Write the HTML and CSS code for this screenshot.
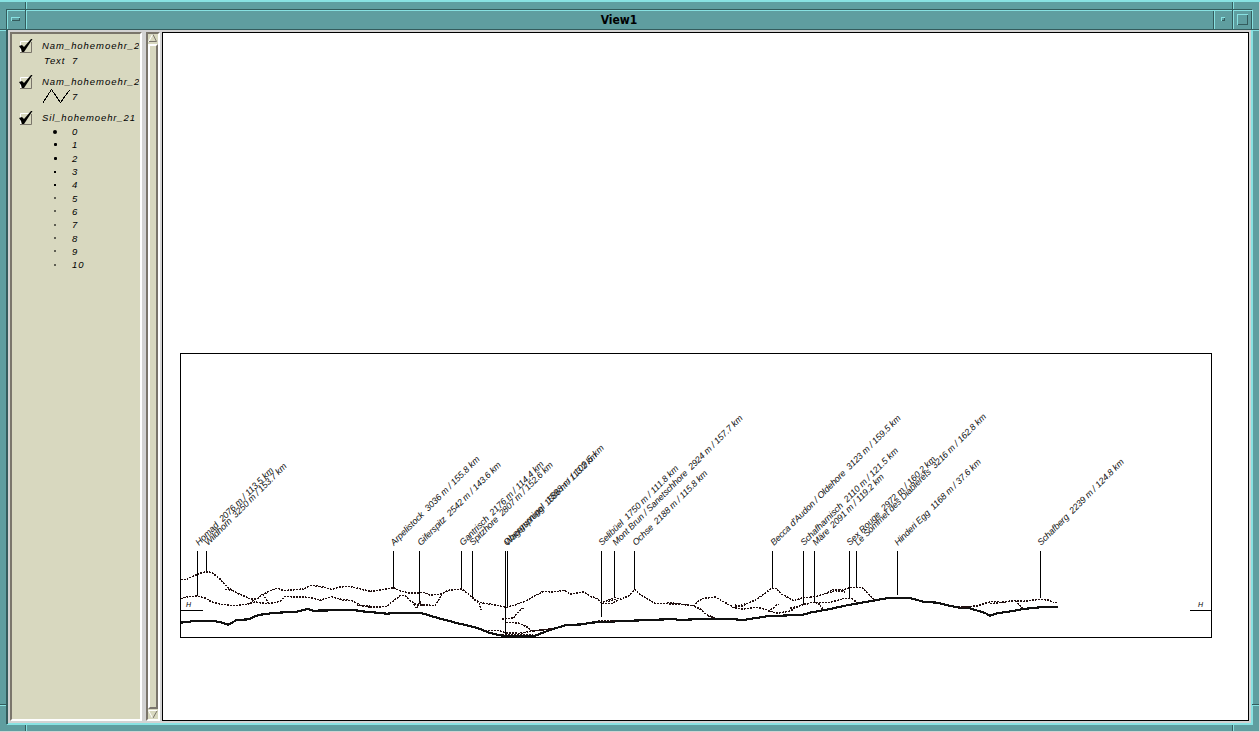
FILE: index.html
```
<!DOCTYPE html>
<html lang="en">
<head>
<meta charset="utf-8">
<title>View1</title>
<link rel="stylesheet" href="styles.css">
</head>
<body>
<main class="window">
  <svg class="frame" width="1260" height="732" shape-rendering="crispEdges" aria-hidden="true">
    <path class="lit" d="M0 0H1260V2H0ZM7 10H1252V11H7ZM7 10H8V29H7ZM0 30H6V31H0ZM26 2H27V29H26ZM1214 11H1215V29H1214ZM1233 2H1234V29H1233ZM1252 10H1253V29H1252ZM1251 30H1253V725H1251ZM1253 30H1259V31H1253ZM7 723H1253V725H7ZM0 705H6V706H0ZM1253 705H1259V706H1253ZM26 725H27V731H26ZM1233 725H1234V731H1233Z"/>
    <path class="dim" d="M6 9H1252V10H6ZM6 9H7V30H6ZM6 29H1259V30H6ZM6 30H8V724H6ZM25 2H26V29H25ZM1213 11H1214V29H1213ZM1232 2H1233V29H1232ZM1251 11H1252V29H1251ZM0 704H6V705H0ZM1252 704H1259V705H1252ZM25 725H26V731H25ZM1232 725H1233V731H1232ZM0 29H6V30H0Z"/>
    <path class="pale" d="M1259 2H1260V732H1259ZM0 731H1260V732H0Z"/>
    <path class="lit" d="M11 17H20V18H11ZM11 17H12V21H11ZM1221 17H1225V18H1221ZM1221 17H1222V21H1221ZM1237 14H1248V15H1237ZM1237 14H1238V25H1237Z"/>
    <path class="dim" d="M12 20H20V21H12ZM19 18H20V21H19ZM1222 20H1225V21H1222ZM1224 18H1225V21H1224ZM1238 24H1248V25H1238ZM1247 15H1248V25H1247Z"/>
  </svg>
  <header class="title">View1</header>
  <div class="content">
    <aside class="legend">
      <section class="theme">
        <div class="name"><svg class="check" viewBox="0 0 15 15"><path class="edge-d" d="M2 13.5H13.500V3"/><path class="edge-l" d="M2.500 13V2.500H12"/><path d="M1 7L4 6L6 8L13 0L14.500 0L8 10L6 13L4 13L3 10Z"/></svg><span>Nam_hohemoehr_2</span></div>
        <div class="sample text"><span>Text</span><b>7</b></div>
      </section>
      <section class="theme">
        <div class="name"><svg class="check" viewBox="0 0 15 15"><path class="edge-d" d="M2 13.5H13.500V3"/><path class="edge-l" d="M2.500 13V2.500H12"/><path d="M1 7L4 6L6 8L13 0L14.500 0L8 10L6 13L4 13L3 10Z"/></svg><span>Nam_hohemoehr_2</span></div>
        <div class="sample"><svg class="zig" viewBox="0 0 28 15"><path d="M.5 14.5L9.500 .5L18.500 13.500L27.500 1"/></svg><b>7</b></div>
      </section>
      <section class="theme">
        <div class="name"><svg class="check" viewBox="0 0 15 15"><path class="edge-d" d="M2 13.5H13.500V3"/><path class="edge-l" d="M2.500 13V2.500H12"/><path d="M1 7L4 6L6 8L13 0L14.500 0L8 10L6 13L4 13L3 10Z"/></svg><span class="sil">Sil_hohemoehr_21</span></div>
        <ul class="classes">
          <li><i class="d4"></i>0</li><li><i class="d35"></i>1</li><li><i class="d3"></i>2</li><li><i class="d2"></i>3</li><li><i class="d2"></i>4</li><li><i></i>5</li><li><i></i>6</li><li><i></i>7</li><li><i></i>8</li><li><i></i>9</li><li><i></i>10</li>
        </ul>
      </section>
    </aside>
    <div class="scroll">
      <svg class="arrow" viewBox="0 0 10 9"><path class="edge-l" d="M.5 8L4.500 .5"/><path class="edge-d" d="M5 .5L8.500 7.500H1"/></svg>
      <div class="thumb"></div>
      <svg class="arrow" viewBox="0 0 10 9"><path class="edge-l" d="M9 .5H.5L4.500 8"/><path class="edge-d" d="M9 1L5 8"/></svg>
    </div>
    <section class="view">
      <svg class="map" viewBox="163 33 1085 687">
        <g class="rule" shape-rendering="crispEdges">
          <path d="M180.500 353.500H1211.500V637.500H180.500ZM181 610.500H203M1190 610.500H1211"/>
          <path d="M197.500 551V595M206.500 551V571M393.500 551V588M419.500 551V603M461.500 551V589M472.500 551V598M505.500 551V636M507.500 551V607M601.500 551V617M614.500 551V598M634.500 551V590M772.500 551V588M803.500 551V604M814.500 551V603M849.500 551V598M856.500 551V588M897.500 551V595M1040.500 551V598"/>
        </g>
        <g transform="translate(170 540) scale(.33333)">
          <path class="near" d="M32 248L75 243L130 242L160 249L175 254L200 240L235 238L265 225L310 219L380 215L412 207L430 212L550 210L600 217"/>
          <path class="far" d="M32 118L50 118L70 108L90 100L105 96L125 97L150 117L170 140L185 150L205 161L225 169L240 176L260 178L275 165L290 158L305 150L322 144L340 152L375 149L400 147L425 135L445 139L465 142L485 149L505 142L530 139L550 141L575 148L600 154"/>
          <path class="far" d="M32 176L55 170L80 168L105 174L125 186L155 193L190 197L230 193L255 186L290 191L315 188L330 183L345 169L370 171L420 172L450 181L485 170L520 180L545 181L560 190L575 198L600 201M240 190L262 172M278 163L290 180L297 192M165 148L185 150M560 196L600 198"/>
        </g>
        <g transform="translate(370 540) scale(.33333)">
          <path class="near" d="M0 216L50 221L90 218L150 218L200 233L260 249L320 263L360 279L400 288L490 289L545 268L590 255L640 253L660 248"/>
          <path class="far" d="M0 154L40 149L70 143L90 152L115 159L165 158L180 165L215 162L235 151L275 147L295 162L315 180L335 189L360 192L410 202L435 195L465 184L520 154L545 156L585 151L600 162L640 156L660 168"/>
          <path class="far" d="M0 201L50 200L65 187L90 167L105 167L120 181L140 195L195 196L205 182L215 163M132 192L140 205L150 186L162 199M307 172L328 190L333 210M395 237L430 234L445 215L462 202M408 247L445 249L470 260L485 274M345 271L385 271L410 279L450 280L485 273L545 267M395 284L490 284M490 273L540 267"/>
        </g>
        <g transform="translate(590 540) scale(.33333)">
          <path class="near" d="M0 248L60 245L100 243L180 240L250 237L270 240L330 237L420 237L460 240L530 229L640 224L660 219"/>
          <path class="far" d="M0 170L15 172L35 188L55 181L75 172L90 178L118 167L135 149L150 163L170 176L195 190L280 193L310 197L335 176L375 171L410 190L435 205L460 207L500 202L530 209L560 220L600 213L640 192L660 191"/>
          <path class="far" d="M35 190L65 190L85 180M55 184L90 174M305 195L330 207L350 224L375 234M230 187L305 197M435 195L455 199L500 178L545 145L558 145L575 162L610 182L640 173L660 172M435 202L470 190M535 215L545 207L565 192M600 205L640 195M355 228L375 233M25 241L75 243"/>
        </g>
        <g transform="translate(810 540) scale(.33333)">
          <path class="near" d="M0 218L60 207L115 195L190 182L240 173L295 173L340 185L380 188L440 202L480 205L525 219L540 227L560 220L610 213L640 207L690 202L743 201"/>
          <path class="far" d="M0 171L20 169L50 159L70 148L95 151L120 143L155 142L175 162L195 180M50 160L75 152L105 156M0 187L60 187L105 175L125 176L142 188M15 187L30 193L38 208"/>
          <path class="far" d="M445 202L500 198L545 184L570 187L610 182L640 184L690 178L715 180L728 188L743 188M540 191L600 184M615 183L640 206M450 202L480 200"/>
        </g>
        <g class="peaks">
          <text transform="translate(199 546) rotate(-45)" textLength="106">Homad&#160; 2076 m / 113.5 km</text>
          <text transform="translate(208 546) rotate(-45)" textLength="112">Wildhorn&#160; 3250 m / 153.7 km</text>
          <text transform="translate(394 546) rotate(-45)" textLength="122">Arpelistock&#160; 3036 m / 155.8 km</text>
          <text transform="translate(421 546) rotate(-45)" textLength="114">Giferspitz&#160; 2542 m / 143.6 km</text>
          <text transform="translate(463 546) rotate(-45)" textLength="115">Gantrisch&#160; 2176 m / 114.4 km</text>
          <text transform="translate(473 546) rotate(-45)" textLength="114">Spitzhore&#160; 2807 m / 152.6 km</text>
          <text transform="translate(507 546) rotate(-45)" textLength="138">Obergurnigel&#160; 1598 m / 109.5 km</text>
          <text transform="translate(508 546) rotate(-45)" textLength="127">Wagersprung&#160; 1586 m / 113.2 km</text>
          <text transform="translate(602 546) rotate(-45)" textLength="109">Selibüel&#160; 1750 m / 111.8 km</text>
          <text transform="translate(616 546) rotate(-45)" textLength="180">Mont Brun / Sanetschhore&#160; 2924 m / 157.7 km</text>
          <text transform="translate(636 546) rotate(-45)" textLength="102">Ochse&#160; 2188 m / 115.8 km</text>
          <text transform="translate(774 546) rotate(-45)" textLength="180">Becca d'Audon / Oldehore&#160; 3123 m / 159.5 km</text>
          <text transform="translate(804 546) rotate(-45)" textLength="134">Schafharnisch&#160; 2110 m / 121.5 km</text>
          <text transform="translate(816 546) rotate(-45)" textLength="97">Märe&#160; 2091 m / 119.2 km</text>
          <text transform="translate(850 546) rotate(-45)" textLength="122">Sex Rouge&#160; 2972 m / 160.2 km</text>
          <text transform="translate(858 546) rotate(-45)" textLength="182">Le Sommet des Diablerets&#160; 3216 m / 162.8 km</text>
          <text transform="translate(898 546) rotate(-45)" textLength="118">Hinderi Egg&#160; 1168 m / 37.6 km</text>
          <text transform="translate(1041 546) rotate(-45)" textLength="118">Schafberg&#160; 2239 m / 124.8 km</text>
        </g>
        <g class="horizon"><text x="186" y="607">H</text><text x="1198" y="607">H</text></g>
      </svg>
    </section>
  </div>
</main>
</body>
</html>
```
FILE: styles.css
```
* { box-sizing: border-box; }
body { margin: 0; overflow: hidden; background: #5f9ea0; font-family: "Liberation Sans", Arial, sans-serif; color: #000; }
.window { position: relative; width: 1260px; height: 732px; padding: 11px 9px 9px 8px; display: flex; flex-direction: column; background: #5f9ea0; }
.frame { position: absolute; left: 0; top: 0; }
.lit { fill: #88e2e2; }
.dim { fill: #345c5d; }
.pale { fill: #d3d3d3; }
.title { position: relative; height: 19px; padding-right: 21px; text-align: center; font: bold 12px/19px "DejaVu Sans Condensed", "DejaVu Sans", sans-serif; }
.content { position: relative; width: 1243px; height: 693px; padding: 2px; display: flex; background: #d3d3d3; }
.legend { width: 132px; height: 689px; margin-right: 4px; padding: 5px 0 0 6px; overflow: hidden; background: #d8d8bf; border: 2px solid; border-color: #7a756b #fff #fff #7a756b; font-size: 9.5px; font-style: italic; letter-spacing: .95px; }
.theme { height: 36px; }
.name { display: flex; height: 14px; white-space: nowrap; overflow: hidden; width: 121px; line-height: 14px; }
.name span { margin-left: 9px; }
.name .sil { letter-spacing: .88px; }
.check { flex: none; width: 15px; height: 15px; }
.edge-l { fill: none; stroke: #fff; }
.edge-d { fill: none; stroke: #7a756b; }
.sample { display: flex; height: 15px; padding-left: 24px; line-height: 15px; }
.sample.text { padding-left: 26px; }
.sample.text span { width: 28px; }
.sample b { font-weight: normal; }
.zig { width: 28px; height: 15px; margin-right: 2px; fill: none; stroke: #000; stroke-width: 1; shape-rendering: crispEdges; }
.classes { list-style: none; margin: 0; padding: 0; }
.classes li { display: flex; align-items: center; height: 13.3px; }
.classes i { width: 2px; height: 2px; margin: 0 16px 0 36px; background: #000; transform: scale(.75); }
.classes .d4 { width: 4px; height: 4px; margin: 0 15px 0 35px; border-radius: 2px; transform: none; }
.classes .d35 { width: 3px; height: 3px; margin: 0 15px 0 36px; border-radius: 1px; transform: none; }
.classes .d3 { width: 3px; height: 3px; margin: 0 15px 0 36px; border-radius: 1px; transform: none; }
.classes .d2 { transform: none; }
.scroll { width: 14px; height: 689px; margin-right: 2px; display: flex; flex-direction: column; background: #d8d8bf; border: 2px solid; border-color: #7a756b #fff #fff #7a756b; }
.arrow { width: 10px; height: 9px; flex: none; }
.thumb { flex: 1; background: #d8d8bf; border: 2px solid; border-color: #fff #7a756b #7a756b #fff; margin: 1px 0; }
.view { width: 1087px; height: 689px; border: 1px solid #000; background: #fff; }
.map { display: block; width: 1085px; height: 687px; }
.rule { fill: none; stroke: #000; stroke-width: 1; }
.near { fill: none; stroke: #111; stroke-width: 6.5; stroke-linejoin: round; shape-rendering: crispEdges; }
.far { fill: none; stroke: #211010; stroke-width: 4.4; stroke-dasharray: 6 3; shape-rendering: crispEdges; }
.peaks { font-size: 9px; font-style: italic; fill: #111; }
.horizon { font-size: 7px; font-style: italic; }
```
